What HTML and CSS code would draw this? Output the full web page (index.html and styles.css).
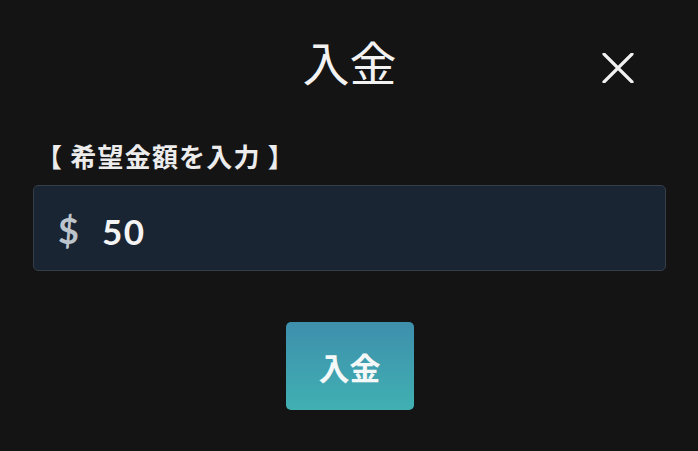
FILE: index.html
```html
<!DOCTYPE html>
<html lang="ja">
<head>
    <meta charset="UTF-8">
    <meta name="viewport" content="width=device-width, initial-scale=1.0">
    <title>入金</title>
    <link rel="stylesheet" href="styles.css">
</head>
<body>
    <div class="modal">
        <div class="modal-header">
            <span></span>
            <h1 class="modal-title">入金</h1>
            <button class="close-btn" aria-label="閉じる">
                <svg width="32" height="30" viewBox="0 0 32 30">
                    <path d="M2 1 L30 29 M30 1 L2 29" stroke="#f2f2f2" stroke-width="3.2" stroke-linecap="round"/>
                </svg>
            </button>
        </div>

        <label class="field-label" for="amount">【 希望金額を入力 】</label>
        <div class="amount-box">
            <span class="currency">$</span>
            <input id="amount" class="amount-input" type="text" value="50">
        </div>

        <div class="actions">
            <button class="deposit-btn">入金</button>
        </div>
    </div>
</body>
</html>
```

FILE: styles.css
```css
body {
    margin: 0;
    background-color: #141414;
    font-family: "Noto Sans CJK JP", "Noto Sans", sans-serif;
    color: #f2f2f2;
    height: 451px;
    overflow: hidden;
}

.modal {
    padding: 38px 32px 0 33px;
    display: flex;
    flex-direction: column;
}

.modal-header {
    display: grid;
    grid-template-columns: 1fr auto 1fr;
    align-items: center;
    height: 60px;
}

.modal-title {
    align-self: start;
    margin: 0;
    font-size: 47px;
    font-weight: 400;
    line-height: 46px;
}

.close-btn {
    justify-self: end;
    margin-right: 32px;
    padding: 0;
    background: none;
    border: none;
    cursor: pointer;
    display: flex;
}

.field-label {
    margin-top: 43px;
    margin-left: 3px;
    font-size: 26px;
    font-weight: 700;
    line-height: 30px;
    letter-spacing: 1.2px;
    color: #ececec;
}

.amount-box {
    margin-top: 14px;
    height: 86px;
    box-sizing: border-box;
    background-color: #1a2533;
    border: 1.5px solid #353e49;
    border-radius: 5px;
    display: flex;
    align-items: center;
    padding-left: 24px;
}

.currency {
    font-family: Lato, sans-serif;
    font-size: 36px;
    font-weight: 700;
    color: #bcc4cc;
    margin-right: 23px;
    padding-top: 4px;
}

.amount-input {
    flex: 1;
    background: none;
    border: none;
    outline: none;
    padding: 6px 0 0;
    font-family: Lato, sans-serif;
    font-size: 35px;
    font-weight: 700;
    letter-spacing: 1.5px;
    color: #f4f4f4;
}

.actions {
    display: flex;
    justify-content: center;
    margin-top: 51px;
}

.deposit-btn {
    width: 128px;
    height: 88px;
    border: none;
    border-radius: 5px;
    background: linear-gradient(#3e8fac, #40b0b2);
    color: #f4f8f8;
    font-family: "Noto Sans CJK JP", sans-serif;
    font-size: 31px;
    font-weight: 700;
    cursor: pointer;
}
```
